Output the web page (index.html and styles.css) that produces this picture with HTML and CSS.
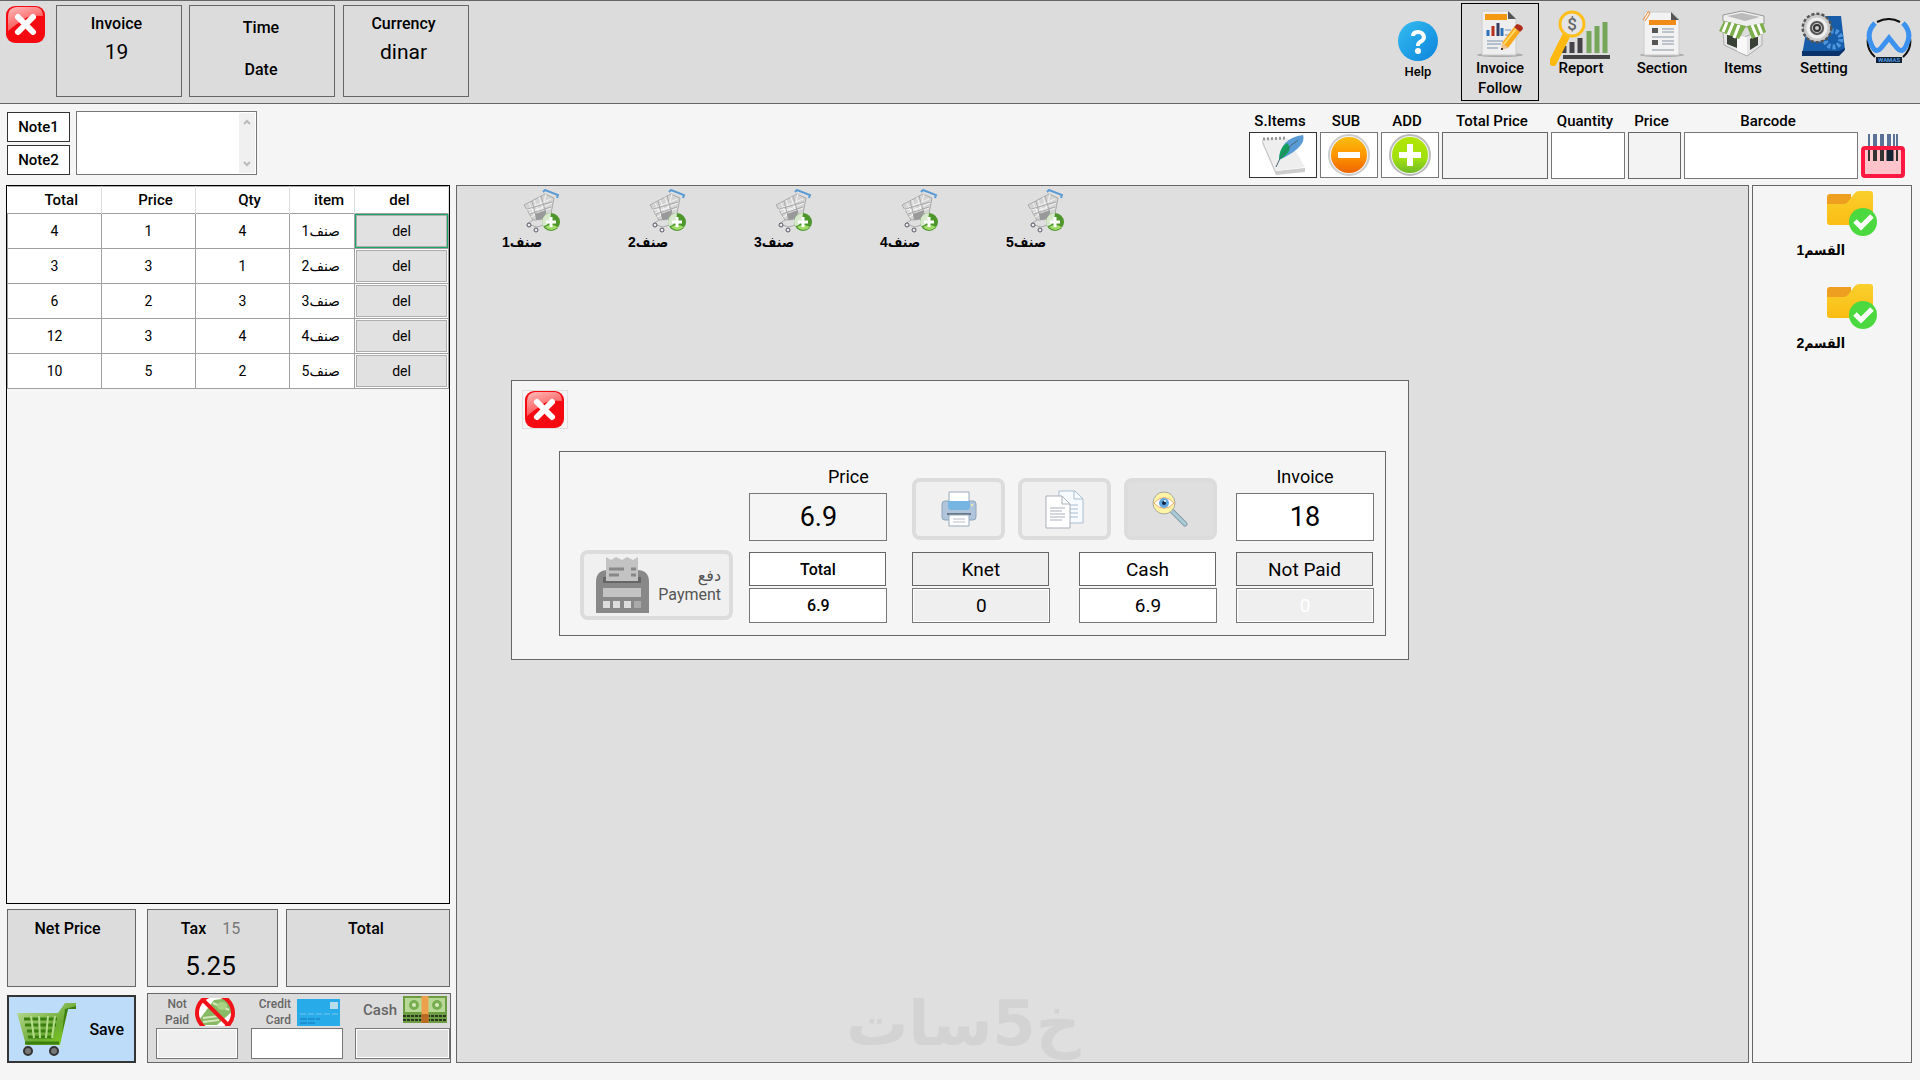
FILE: index.html
```html
<!DOCTYPE html>
<html lang="en">
<head>
    <meta charset="UTF-8">
    <meta name="viewport" content="width=device-width, initial-scale=1.0">
    <title>Point of Sale</title>
    <link rel="stylesheet" href="styles.css">
</head>
<body>
    <!-- shared drawings -->
    <svg class="defs" width="0" height="0" aria-hidden="true">
        <defs>
            <linearGradient id="gloss" x1="0" y1="0" x2="0.5" y2="1">
                <stop offset="0" stop-color="#fbb"/><stop offset="1" stop-color="#f44"/>
            </linearGradient>
            <linearGradient id="blue" x1="0" y1="0" x2="1" y2="1">
                <stop offset="0" stop-color="#35bdf0"/><stop offset="1" stop-color="#0c83dc"/>
            </linearGradient>
            <linearGradient id="orange" x1="0" y1="0" x2="0" y2="1">
                <stop offset="0" stop-color="#f7bd10"/><stop offset="0.5" stop-color="#ff9600"/><stop offset="1" stop-color="#ee6500"/>
            </linearGradient>
            <linearGradient id="lime" x1="0" y1="0" x2="0" y2="1">
                <stop offset="0" stop-color="#b4e600"/><stop offset="0.6" stop-color="#a0e010"/><stop offset="1" stop-color="#72ba28"/>
            </linearGradient>
            <linearGradient id="cartGreen" x1="0" y1="0" x2="1" y2="1">
                <stop offset="0" stop-color="#c4e0a4"/><stop offset="0.6" stop-color="#6cab32"/><stop offset="1" stop-color="#82d615"/>
            </linearGradient>
            <linearGradient id="folderYellow" x1="0" y1="0" x2="0" y2="1">
                <stop offset="0" stop-color="#facf2c"/><stop offset="1" stop-color="#fabd14"/>
            </linearGradient>
        </defs>
        <symbol id="close" viewBox="0 0 40 38">
            <rect x="0" y="0" width="39" height="37" rx="9" fill="#f40a10"/>
            <path d="M2 25V10Q2 2 10 1H30Q37 2 37 10Q24 9 18 13T2 25Z" fill="url(#gloss)"/>
            <path d="M12 11L27 26M27 11L12 26" stroke="#fff" stroke-width="6" stroke-linecap="round"/>
        </symbol>
        <symbol id="cart" viewBox="0 0 38 44">
            <g fill="none" stroke="#aaa" stroke-width="1">
                <path d="M1 16L22 5L31 9L27 30L10 31Z" fill="#d4d4d4"/>
                <path d="M4 20L28 10M6 24L29 14M8 28L28 19M6 14L14 31M11 11L19 31M16 8L23 30M23 5L19 20L3 21" stroke="#f3f3f3"/>
                <path d="M4 20L29 13M7 25L28 18M9 12L14 31M18 7L24 28"/>
                <path d="M10 31L4 35L14 38L27 34"/>
            </g>
            <path d="M12 25L23 21L22 30L13 31Z" fill="#999"/>
            <path d="M20 3L22 1L35 6L34 9" fill="none" stroke="#5a9bd5" stroke-width="2"/>
            <g fill="#eee" stroke="#556" stroke-width="1"><circle cx="6" cy="36" r="2"/><circle cx="13" cy="41" r="2"/></g>
            <circle cx="28" cy="33" r="9" fill="#4c962c"/>
            <path d="M28 24A9 9 0 0 0 20 37Q27 37 28 24" fill="#d7e8cc"/>
            <path d="M22 38Q28 44 35 38Q28 34 22 38Z" fill="#a2dc6a"/>
            <path d="M28 28V38M23 33H33" stroke="#fff" stroke-width="3"/>
        </symbol>
        <symbol id="folder" viewBox="0 0 51 45">
            <path d="M0 6Q0 3 3 3H24V20H0Z" fill="#ee9f20"/>
            <path d="M0 13H17Q20 13 23 8L27 3Q29 0 32 0H43Q46 0 46 3V34H3Q0 34 0 31Z" fill="url(#folderYellow)"/>
            <circle cx="36" cy="31" r="14" fill="#4cd93f"/>
            <path d="M28 30L34 36L45 25" fill="none" stroke="#fff" stroke-width="5"/>
        </symbol>
    </svg>

    <header class="topbar">
        <button class="close-btn" aria-label="Exit"><svg width="40" height="38"><use href="#close"/></svg></button>
        <div class="info-box">
            <h2>Invoice</h2>
            <p>19</p>
        </div>
        <div class="info-box time-box">
            <h2>Time</h2>
            <h2>Date</h2>
        </div>
        <div class="info-box">
            <h2>Currency</h2>
            <p>dinar</p>
        </div>
        <nav class="menu">
            <button class="menu-item help">
                <svg width="41" height="42" viewBox="0 0 41 42">
                    <circle cx="20" cy="21" r="20" fill="url(#blue)"/>
                    <path d="M15 16Q15 12 20 12T26 17Q26 20 22 22Q20 23 20 26" fill="none" stroke="#fff" stroke-width="4"/>
                    <circle cx="20" cy="31" r="3" fill="#fff"/>
                </svg>
                <span>Help</span>
            </button>
            <button class="menu-item active">
                <svg width="48" height="48" viewBox="0 0 48 48">
                    <ellipse cx="24" cy="45" rx="23" ry="2" fill="#aaa"/>
                    <path d="M6 1H32L40 9V45H6Z" fill="#eee" stroke="#ccc"/>
                    <path d="M32 1L40 9H32Z" fill="#555"/>
                    <rect x="9" y="4" width="22" height="6" fill="#f39a12"/>
                    <path d="M12 26V20M26 26V18" stroke="#2d72b8" stroke-width="3"/>
                    <path d="M17 26V16" stroke="#b8301c" stroke-width="3"/>
                    <path d="M22 26V13" stroke="#333d66" stroke-width="3"/>
                    <path d="M11 31H27M11 34H25M11 38H22M29 20H35M29 25H33" stroke="#7890ac" stroke-width="1"/>
                    <path d="M26 33L38 17L44 22L32 38Z" fill="#f8a91c"/>
                    <path d="M28 34L40 19" stroke="#ffdc6c" stroke-width="2"/>
                    <path d="M38 17L41 14Q47 15 47 19L44 22Z" fill="#af2d18"/>
                    <path d="M26 33L32 38L25 40Z" fill="#edc08c"/><circle cx="26" cy="39" r="1" fill="#111"/>
                </svg>
                <span>Invoice<br>Follow</span>
            </button>
            <button class="menu-item report">
                <svg width="62" height="56" viewBox="0 0 62 56">
                    <path d="M13 47H60" stroke="#444" stroke-width="4"/>
                    <path d="M14 43V36M22 43V32M30 43V28" stroke="#454347" stroke-width="5"/>
                    <path d="M39 43V21M47 43V16M55 43V12" stroke="#75a65c" stroke-width="5"/>
                    <path d="M16 26L3 52" stroke="#fdb912" stroke-width="8" stroke-linecap="round"/>
                    <circle cx="22" cy="14" r="12" fill="#e4e4e4" stroke="#fdbf1d" stroke-width="3"/>
                    <text x="22" y="20" text-anchor="middle" font-size="17" fill="#666">$</text>
                </svg>
                <span>Report</span>
            </button>
            <button class="menu-item">
                <svg width="44" height="48" viewBox="0 0 44 48">
                    <ellipse cx="22" cy="45" rx="22" ry="2" fill="#aaa"/>
                    <path d="M4 2H32L39 9V45H4Z" fill="#f2f2f2" stroke="#ccc"/>
                    <path d="M31 2L39 10H31Z" fill="#555"/>
                    <rect x="9" y="10" width="27" height="5" fill="#f18b18"/>
                    <path d="M3 10L8 2Q11 1 9 5L5 11" fill="none" stroke="#ef8b39"/>
                    <path d="M12 18H18V23H12ZM12 30H18V35H12Z" fill="#555"/>
                    <path d="M22 19H34M22 22H34M12 27H34M22 31H34M22 34H34M12 40H34" stroke="#8694a4"/>
                </svg>
                <span>Section</span>
            </button>
            <button class="menu-item">
                <svg width="48" height="48" viewBox="0 0 48 48">
                    <path d="M4 20L26 27L43 19V35L28 46L5 35Z" fill="#e5e5e5" stroke="#aaa"/>
                    <path d="M8 24L18 28V38L8 34ZM31 29L39 24V35L31 40Z" fill="#394035"/>
                    <path d="M18 25L28 27V45L18 41Z" fill="#f8f8f8"/>
                    <path d="M4 5L23 1L45 6V14L27 17L4 11Z" fill="#efefef" stroke="#999"/>
                    <path d="M8 6L23 3L41 7L26 11Z" fill="#bbb"/>
                    <path d="M5 11L27 16L20 29L0 21ZM28 16L44 13L47 22L33 29Z" fill="#7dae4c"/>
                    <path d="M8 12L4 22M14 13L9 25M20 15L15 28M33 15L38 27M39 14L43 24" stroke="#fff" stroke-width="3"/>
                </svg>
                <span>Items</span>
            </button>
            <button class="menu-item">
                <svg width="46" height="48" viewBox="0 0 46 48">
                    <path d="M8 6H40L44 40L37 45H1Z" fill="#165ca9"/><path d="M1 41H38L44 38L43 41L38 46H1Z" fill="#0c326c"/>
                    <circle cx="32" cy="29" r="8" fill="none" stroke="#4d96dc" stroke-width="5" stroke-dasharray="3 2"/>
                    <circle cx="16" cy="18" r="14" fill="#aaa" stroke="#555" stroke-width="3" stroke-dasharray="3 2"/>
                    <circle cx="16" cy="18" r="13" fill="#ccc"/>
                    <g fill="none"><circle cx="16" cy="18" r="9" stroke="#eee" stroke-width="3"/><circle cx="16" cy="18" r="6" stroke="#555" stroke-width="2"/><circle cx="16" cy="18" r="3" stroke="#333" stroke-width="2"/></g>
                </svg>
                <span>Setting</span>
            </button>
            <svg class="brand" width="46" height="48" viewBox="0 0 46 48">
                <path d="M11 4Q23 -2 34 4M2 20Q0 31 9 39M44 20Q46 31 37 39" fill="none" stroke="#111" stroke-width="2"/>
                <path d="M9 5Q-1 15 6 28Q10 36 15 30L23 20L31 30Q36 36 40 28Q47 15 37 5" fill="none" stroke="#3c92ee" stroke-width="5"/>
                <rect x="10" y="39" width="26" height="6" fill="#123"/>
                <text x="23" y="44" text-anchor="middle" font-size="6" fill="#59a6f3">WAMAS</text>
            </svg>
        </nav>
    </header>

    <section class="entry-bar">
        <div class="note-buttons">
            <button>Note1</button>
            <button>Note2</button>
        </div>
        <div class="note-area">
            <textarea aria-label="Note"></textarea>
            <div class="scroller">
                <svg width="8" height="6" viewBox="0 0 8 6"><path d="M1 5L4 2L7 5" fill="none" stroke="#bbb" stroke-width="2"/></svg>
                <svg width="8" height="6" viewBox="0 0 8 6"><path d="M1 1L4 4L7 1" fill="none" stroke="#bbb" stroke-width="2"/></svg>
            </div>
        </div>
        <div class="entry-fields">
            <div class="field s-items">
                <label for="s-items">S.Items</label>
                <button id="s-items">
                    <svg width="46" height="42" viewBox="0 0 46 42">
                        <path d="M2 5L16 37L45 34V38L16 41L2 9Z" fill="#ccc"/>
                        <path d="M2 4L28 4L45 33L16 37Z" fill="#eee"/>
                        <path d="M3 5L27 4" stroke="#999" stroke-width="3" stroke-dasharray="2 2"/>
                        <path d="M19 26Q20 4 43 1Q47 13 19 26Z" fill="#5b9bd5"/>
                        <path d="M19 26Q19 14 27 9Q35 17 19 26Z" fill="#13a05c"/>
                        <path d="M16 33Q22 17 38 6" fill="none" stroke="#467"/>
                    </svg>
                </button>
            </div>
            <div class="field round-btn">
                <label for="sub">SUB</label>
                <button id="sub">
                    <svg width="44" height="44" viewBox="0 0 44 44">
                        <circle cx="22" cy="22" r="20" fill="#f4f4f4" stroke="#ccc" stroke-width="2"/>
                        <circle cx="22" cy="22" r="18" fill="url(#orange)"/>
                        <path d="M11 22H33" stroke="#fff" stroke-width="6"/>
                    </svg>
                </button>
            </div>
            <div class="field round-btn">
                <label for="add">ADD</label>
                <button id="add">
                    <svg width="44" height="44" viewBox="0 0 44 44">
                        <circle cx="22" cy="22" r="20" fill="#f4f4f4" stroke="#bbb" stroke-width="2"/>
                        <circle cx="22" cy="22" r="18" fill="url(#lime)"/>
                        <path d="M11 22H33M22 11V33" stroke="#fff" stroke-width="6"/>
                    </svg>
                </button>
            </div>
            <div class="field total-price">
                <label for="total-price">Total Price</label>
                <input id="total-price" type="text" readonly>
            </div>
            <div class="field quantity">
                <label for="quantity">Quantity</label>
                <input id="quantity" type="text">
            </div>
            <div class="field price">
                <label for="price">Price</label>
                <input id="price" type="text" readonly>
            </div>
            <div class="field barcode">
                <label for="barcode">Barcode</label>
                <input id="barcode" type="text">
            </div>
            <svg class="barcode-icon" width="44" height="46" viewBox="0 0 44 46">
                <path d="M8 1V17M33 1V17M36 1V17" stroke="#5b7196" stroke-width="2"/>
                <path d="M14 1V17M21 1V17M28 1V17" stroke="#5b7196" stroke-width="4"/>
                <rect x="2" y="15" width="40" height="28" rx="2" fill="#ffc4ca"/>
                <path d="M8 16V28M36 16V28" stroke="#333" stroke-width="2"/>
                <path d="M14 16V28M21 16V28" stroke="#333" stroke-width="4"/><path d="M29 16V28" stroke="#123" stroke-width="7"/>
                <rect x="2" y="15" width="40" height="28" rx="2" fill="none" stroke="#fc1840" stroke-width="4"/>
            </svg>
        </div>
    </section>

    <main class="workspace">
        <aside class="order">
            <div class="order-list">
                <table>
                    <thead>
                        <tr><th>Total</th><th>Price</th><th>Qty</th><th class="item-col">item</th><th class="del-col">del</th></tr>
                    </thead>
                    <tbody>
                        <tr><td>4</td><td>1</td><td>4</td><td class="item-col">صنف1</td><td class="del-cell selected"><button>del</button></td></tr>
                        <tr><td>3</td><td>3</td><td>1</td><td class="item-col">صنف2</td><td class="del-cell"><button>del</button></td></tr>
                        <tr><td>6</td><td>2</td><td>3</td><td class="item-col">صنف3</td><td class="del-cell"><button>del</button></td></tr>
                        <tr><td>12</td><td>3</td><td>4</td><td class="item-col">صنف4</td><td class="del-cell"><button>del</button></td></tr>
                        <tr><td>10</td><td>5</td><td>2</td><td class="item-col">صنف5</td><td class="del-cell"><button>del</button></td></tr>
                    </tbody>
                </table>
            </div>
            <div class="totals">
                <div class="sum-box net"><h2>Net Price</h2></div>
                <div class="sum-box tax">
                    <h2>Tax <span>15</span></h2>
                    <p>5.25</p>
                </div>
                <div class="sum-box sum"><h2>Total</h2></div>
            </div>
            <div class="checkout">
                <button class="save">
                    <svg width="60" height="56" viewBox="0 0 60 56">
                        <path d="M0 12H41L48 2H59V8H51L43 44H9Z" fill="url(#cartGreen)"/>
                        <path d="M48 8L59 5V8H51L45 32Z" fill="#3b7f10"/>
                        <path d="M7 18H40M8 24H39M10 30H37M11 36H36" stroke="#3b7f10" stroke-width="3"/>
                        <path d="M14 15L17 37M22 15L23 37M31 15L29 37M38 15L35 37" stroke="#b4dd8b" stroke-width="2"/>
                        <path d="M8 42H42" stroke="#3b7f10" stroke-width="3"/>
                        <g fill="#777" stroke="#333" stroke-width="2"><circle cx="11" cy="50" r="4"/><circle cx="37" cy="50" r="4"/></g>
                    </svg>
                    <span>Save</span>
                </button>
                <div class="payments">
                    <div class="pay not-paid">
                        <label for="not-paid">Not<br>Paid</label>
                        <svg width="40" height="28" viewBox="0 0 40 28">
                            <circle cx="20" cy="15" r="17" fill="#fff"/>
                            <path d="M4 22L19 2L34 0L39 12L22 27H8Z" fill="#88b964"/>
                            <path d="M8 20L24 18M8 24L24 22M18 5L34 12" stroke="#d5e8bb" stroke-width="2"/>
                            <ellipse cx="27" cy="8" rx="5" ry="4" fill="#aad284"/>
                            <circle cx="20" cy="15" r="18" fill="none" stroke="#f2131a" stroke-width="4"/>
                            <path d="M8 2L33 27" stroke="#f2131a" stroke-width="4"/>
                        </svg>
                        <input id="not-paid" type="text" readonly>
                    </div>
                    <div class="pay credit">
                        <label for="credit">Credit<br>Card</label>
                        <svg width="43" height="27" viewBox="0 0 43 27">
                            <rect width="43" height="27" fill="#27ace9"/>
                            <rect x="33" y="3" width="8" height="7" fill="#b8dcea"/>
                            <path d="M3 15H41" stroke="#75c6ee" stroke-dasharray="6 2"/>
                            <path d="M3 20H23M3 24H18" stroke="#1775b6" stroke-dasharray="7 1"/>
                        </svg>
                        <input id="credit" type="text">
                    </div>
                    <div class="pay cash">
                        <label for="cash">Cash</label>
                        <svg width="44" height="27" viewBox="0 0 44 27">
                            <rect width="44" height="27" fill="#6d9d43"/>
                            <rect x="2" y="2" width="40" height="14" fill="#b7d995"/>
                            <circle cx="11" cy="9" r="5" fill="#79ad52"/><circle cx="34" cy="9" r="5" fill="#79ad52"/>
                            <circle cx="11" cy="9" r="2" fill="#d6eabb"/><circle cx="34" cy="9" r="2" fill="#d6eabb"/>
                            <path d="M0 20H44M0 24H44" stroke="#27351e" stroke-width="2" stroke-dasharray="3 1"/>
                            <path d="M22 0V27" stroke="#eda04c" stroke-width="7"/><path d="M22 18V27" stroke="#b96b24" stroke-width="7"/>
                        </svg>
                        <input id="cash" type="text" readonly>
                    </div>
                </div>
            </div>
        </aside>

        <section class="products">
            <button class="product"><svg width="38" height="44"><use href="#cart"/></svg><span>صنف1</span></button>
            <button class="product"><svg width="38" height="44"><use href="#cart"/></svg><span>صنف2</span></button>
            <button class="product"><svg width="38" height="44"><use href="#cart"/></svg><span>صنف3</span></button>
            <button class="product"><svg width="38" height="44"><use href="#cart"/></svg><span>صنف4</span></button>
            <button class="product"><svg width="38" height="44"><use href="#cart"/></svg><span>صنف5</span></button>
            <div class="watermark">خ5سات</div>
        </section>

        <aside class="sections">
            <button class="folder"><svg width="51" height="45"><use href="#folder"/></svg><span>القسم1</span></button>
            <button class="folder"><svg width="51" height="45"><use href="#folder"/></svg><span>القسم2</span></button>
        </aside>
    </main>

    <div class="dialog" role="dialog" aria-label="Invoice Follow">
        <button class="close-btn dialog-close" aria-label="Close"><svg width="40" height="38"><use href="#close"/></svg></button>
        <div class="dialog-body">
            <button class="tool payment">
                <svg width="53" height="57" viewBox="0 0 53 57">
                    <path d="M0 56V25Q0 13 12 13H41Q53 13 53 25V56Z" fill="#888"/>
                    <rect x="7" y="20" width="38" height="6" fill="#666"/>
                    <path d="M10 0L15 3L20 0L26 3L31 0L37 3L42 0V24H10Z" fill="#c3c3c3"/>
                    <path d="M13 12H28M35 12H40M13 18H23M35 18H40" stroke="#888" stroke-width="3"/>
                    <rect x="7" y="31" width="38" height="9" fill="#c3c3c3"/>
                    <path d="M7 44H14V51H7ZM17 44H24V51H17ZM28 44H35V51H28Z" fill="#ddd"/><path d="M38 44H45V51H38Z" fill="#aaa"/>
                </svg>
                <span>دفع<br>Payment</span>
            </button>
            <div class="column price-column">
                <label for="d-price">Price</label>
                <input id="d-price" class="big" type="text" value="6.9" readonly>
                <div class="pair small">
                    <label for="d-total">Total</label>
                    <input id="d-total" type="text" value="6.9">
                </div>
            </div>
            <div class="middle">
                <div class="tools">
                    <button class="tool" aria-label="Print">
                        <svg width="36" height="36" viewBox="0 0 36 36">
                            <rect x="1" y="10" width="34" height="19" rx="3" fill="#b0c5db" stroke="#8ca3b8"/>
                            <path d="M8 1H28V11H8Z" fill="#fff" stroke="#9ab"/>
                            <path d="M7 10H29V16Q29 19 26 19H10Q7 19 7 16Z" fill="#76b5e2"/>
                            <path d="M6 23H30" stroke="#678" stroke-width="2"/>
                            <path d="M8 24H28V35H8Z" fill="#fff" stroke="#9ab"/>
                            <path d="M12 28H24M12 31H24" stroke="#bbc"/><circle cx="31" cy="14" r="1" fill="#fff4a0"/>
                        </svg>
                    </button>
                    <button class="tool" aria-label="Copy">
                        <svg width="39" height="39" viewBox="0 0 39 39">
                            <path d="M14 1H30L38 9V33H14Z" fill="#f7fbff" stroke="#a8bed2"/>
                            <path d="M29 1V9H38M24 15H33M24 19H33M24 23H33M24 27H33" fill="none" stroke="#a8bed2"/>
                            <path d="M1 6H17L25 14V38H1Z" fill="#fff" stroke="#aaafb8"/>
                            <path d="M17 6V14H25M5 18H20M5 21H17M5 24H20M5 27H20M5 30H17" fill="none" stroke="#aaafb8"/>
                        </svg>
                    </button>
                    <button class="tool pressed" aria-label="Search">
                        <svg width="36" height="36" viewBox="0 0 36 36">
                            <path d="M20 20L33 33" stroke="#899ba6" stroke-width="5" stroke-linecap="round"/>
                            <path d="M20 20L33 33" stroke="#aacbd8" stroke-width="3" stroke-linecap="round"/>
                            <circle cx="12" cy="12" r="11" fill="#fff4a5" stroke="#a7aaa0"/>
                            <path d="M2 12Q12 1 22 12Q12 23 2 12Z" fill="#fff" stroke="#e9ae78"/>
                            <circle cx="12" cy="12" r="5" fill="#63a8dd"/><circle cx="12" cy="12" r="2" fill="#124"/><circle cx="13" cy="10" r="1" fill="#fff"/>
                        </svg>
                    </button>
                </div>
                <div class="pairs">
                    <div class="pair muted">
                        <label for="d-knet">Knet</label>
                        <input id="d-knet" type="text" value="0">
                    </div>
                    <div class="pair">
                        <label for="d-cash">Cash</label>
                        <input id="d-cash" type="text" value="6.9">
                    </div>
                </div>
            </div>
            <div class="column">
                <label for="d-invoice">Invoice</label>
                <input id="d-invoice" class="big" type="text" value="18">
                <div class="pair muted faded">
                    <label for="d-not-paid">Not Paid</label>
                    <input id="d-not-paid" type="text" value="0">
                </div>
            </div>
        </div>
    </div>
</body>
</html>
```
FILE: styles.css
```css
* {
    box-sizing: border-box;
}
body {
    margin: 0;
    min-height: 100vh;
    display: flex;
    flex-direction: column;
    background-color: #f5f5f5;
    color: #000;
    font-family: Roboto, "DejaVu Sans", sans-serif;
    font-size: 16px;
    font-weight: 500;
}
h2, p {
    margin: 0;
    font-weight: 500;
}
h2 {
    font-size: 16px;
    line-height: 20px;
}
button, input, textarea {
    font: inherit;
    color: inherit;
    padding: 0;
    margin: 0;
    border-radius: 0;
    outline: none;
}
button {
    cursor: pointer;
}
svg {
    display: block;
    flex-shrink: 0;
}
.defs {
    position: absolute;
}

/* top bar */
.topbar {
    display: flex;
    align-items: flex-start;
    height: 104px;
    padding: 4px 8px 0 3px;
    background-color: #dcdcdc;
    border-top: 1px solid #666;
    border-bottom: 1px solid #666;
}
.close-btn {
    width: 46px;
    height: 39px;
    padding-left: 2px;
    background: none;
    border: 1px solid #e0e0e0;
}
.info-box {
    width: 126px;
    height: 92px;
    margin-left: 8px;
    padding: 8px 5px 0 0;
    border: 1px solid #666;
    text-align: center;
}
.info-box p {
    font-size: 21px;
    line-height: 36px;
    font-weight: 400;
}
.close-btn + .info-box {
    margin-left: 7px;
}
.time-box {
    width: 146px;
    margin-left: 7px;
    padding: 12px 2px 0 0;
}
.time-box h2 + h2 {
    margin-top: 22px;
}
.menu {
    display: flex;
    align-items: flex-start;
    margin-left: auto;
    margin-top: -2px;
}
.menu-item {
    display: flex;
    flex-direction: column;
    align-items: center;
    width: 78px;
    height: 98px;
    margin-right: 3px;
    padding-top: 6px;
    background: none;
    border: 1px solid transparent;
    font-size: 15px;
    line-height: 20px;
}
.menu-item.active {
    border-color: #000;
}
.menu-item.help {
    margin-right: 4px;
    padding-top: 16px;
    font-size: 13px;
}
.report svg {
    margin-bottom: -8px;
}
.brand {
    margin-top: 15px;
}

/* entry bar */
.entry-bar {
    display: flex;
    align-items: flex-start;
    gap: 6px;
    padding: 7px 15px 0 7px;
    height: 81px;
}
.note-buttons {
    display: flex;
    flex-direction: column;
    gap: 3px;
    padding-top: 1px;
}
.note-buttons button {
    width: 63px;
    height: 30px;
    background-color: #fff;
    border: 1px solid #333;
    font-size: 15px;
}
.note-area {
    display: flex;
    width: 181px;
    height: 64px;
    padding: 1px;
    background-color: #fff;
    border: 1px solid #777;
}
.note-area textarea {
    flex: 1;
    min-width: 0;
    border: none;
    resize: none;
    overflow: hidden;
}
.scroller {
    display: flex;
    flex-direction: column;
    justify-content: space-between;
    align-items: center;
    width: 16px;
    padding: 6px 0;
    background-color: #f0f0f0;
}
.entry-fields {
    display: flex;
    align-items: flex-start;
    gap: 3px;
    margin-left: auto;
}
.field {
    display: flex;
    flex-direction: column;
    text-align: center;
    font-size: 15px;
}
.field label {
    line-height: 21px;
    padding-right: 6px;
    white-space: nowrap;
}
.field input {
    width: 100%;
    height: 47px;
    background-color: #fff;
    border: 1px solid #777;
}
.field input:read-only {
    background-color: #f3f3f3;
    border-color: #666;
}
.field button {
    display: flex;
    justify-content: center;
    align-items: center;
    height: 46px;
    background-color: #fff;
    border: 1px solid #777;
}
.s-items {
    width: 68px;
}
.s-items button {
    border-color: #333;
}
.round-btn { width: 58px; }
.total-price { width: 106px; }
.quantity { width: 74px; }
.price { width: 53px; }
.barcode { width: 174px; }
.barcode-icon {
    margin-top: 22px;
}

/* workspace */
.workspace {
    flex: 1;
    display: flex;
    padding: 0 8px 17px 6px;
}
.order {
    display: flex;
    flex-direction: column;
    width: 445px;
    margin-right: 5px;
}
.order-list {
    flex: 1;
    width: 444px;
    border: 1px solid #000;
}
table {
    width: 100%;
    table-layout: fixed;
    border-collapse: collapse;
    text-align: center;
    background-color: #fff;
}
th {
    height: 27px;
    padding: 0 0 0 14px;
    border-right: 1px solid #ddd;
    font-size: 15px;
    font-weight: 500;
}
thead {
    border-top: 1px solid #aaa;
}
td {
    height: 35px;
    padding: 0;
    border: 1px solid #a0a0a0;
    font-size: 14px;
    font-weight: 400;
}
.item-col {
    width: 65px;
    padding: 0 14px 0 0;
    text-align: right;
}
th.item-col {
    padding-right: 10px;
}
.del-col {
    width: 94px;
    padding: 0 4px 0 0;
}
.del-cell {
    padding: 1px;
}
.del-cell button {
    display: block;
    width: 100%;
    height: 32px;
    background-color: #e1e1e1;
    border: 1px solid #adadad;
}
.selected button {
    outline: 1px solid #18a765;
}
.totals {
    display: flex;
    margin: 5px 0 6px 1px;
}
.sum-box {
    height: 78px;
    padding: 9px 4px 0 0;
    background-color: #dcdcdc;
    border: 1px solid #666;
    text-align: center;
}
.net {
    width: 129px;
    padding-right: 8px;
}
.tax {
    width: 131px;
    margin: 0 8px 0 11px;
}
.tax span {
    margin-left: 12px;
    color: #777;
    font-weight: 400;
}
.tax p {
    font-size: 26px;
    line-height: 30px;
    margin-top: 12px;
    font-weight: 400;
}
.sum {
    width: 164px;
}
.checkout {
    display: flex;
    align-items: flex-end;
    margin-left: 1px;
}
.save {
    display: flex;
    align-items: center;
    justify-content: space-between;
    width: 129px;
    height: 68px;
    padding: 0 10px 0 8px;
    background-color: #bddcfa;
    border: 2px solid #333;
}
.payments {
    display: flex;
    width: 304px;
    height: 70px;
    margin-left: 11px;
    padding: 2px 0 3px 8px;
    background-color: #dcdcdc;
    border: 1px solid #666;
}
.pay {
    display: flex;
    flex-wrap: wrap;
    align-items: center;
    align-content: space-between;
    justify-content: flex-end;
    gap: 0 6px;
    color: #666;
    font-size: 12px;
    line-height: 16px;
    text-align: right;
}
.pay svg {
    margin-right: 3px;
}
.pay input {
    width: 100%;
    height: 31px;
    background-color: #fff;
    border: 1px solid #777;
    box-shadow: inset 0 0 0 1px #fff;
}
.not-paid {
    width: 82px;
    text-align: center;
}
.not-paid input {
    background-color: #efefef;
}
.credit {
    width: 92px;
    margin: 0 12px 0 13px;
}
.cash {
    width: 95px;
    font-size: 15px;
}
.cash input {
    background-color: #dedede;
}

/* products */
.products {
    position: relative;
    flex: 1;
    display: flex;
    align-items: flex-start;
    margin-right: 3px;
    padding: 3px 0 0 38px;
    background-color: #dfdfdf;
    border: 1px solid #666;
}
.product, .folder {
    display: flex;
    flex-direction: column;
    background: none;
    border: none;
    font-family: "Liberation Sans", "DejaVu Sans Condensed", "DejaVu Sans", sans-serif;
    font-size: 14px;
    line-height: 18px;
    font-weight: bold;
    text-align: right;
}
.product {
    width: 126px;
    align-items: flex-start;
    padding-left: 7px;
}
.product svg {
    margin-left: 21px;
}
.watermark {
    position: absolute;
    left: 389px;
    bottom: 0;
    font-family: "DejaVu Sans", sans-serif;
    font-size: 62px;
    line-height: 76px;
    font-weight: bold;
    color: #d3d3d3;
}

/* sections */
.sections {
    display: flex;
    flex-direction: column;
    gap: 25px;
    width: 160px;
    padding: 5px 33px 0 0;
    border: 1px solid #666;
}
.folder {
    align-items: flex-end;
    gap: 5px;
}
.folder span {
    margin-right: 33px;
}

/* invoice dialog */
.dialog {
    position: absolute;
    left: 50%;
    top: 380px;
    transform: translateX(-50%);
    width: 898px;
    padding: 9px 22px 23px 10px;
    background-color: #f5f5f5;
    border: 1px solid #666;
}
.dialog-close {
    display: block;
}
.dialog-body {
    display: flex;
    align-items: flex-end;
    margin: 22px 0 0 37px;
    padding: 13px 11px 12px 20px;
    border: 1px solid #666;
}
.dialog input {
    display: block;
    width: 100%;
    background-color: #fff;
    border: 1px solid #777;
    text-align: center;
}
.column {
    width: 138px;
    text-align: center;
    font-size: 18px;
}
.column > label {
    display: block;
    line-height: 24px;
    margin-bottom: 4px;
    font-weight: 400;
}
.dialog .big {
    height: 48px;
    margin-bottom: 11px;
    font-size: 27px;
    font-weight: 400;
}
.price-column {
    margin: 0 25px 0 16px;
}
.price-column > label {
    padding-left: 60px;
}
.dialog .big:read-only {
    background-color: #f5f5f5;
}
.pair {
    width: 138px;
    font-size: 19px;
    font-weight: 400;
    text-align: center;
}
.pair label {
    display: block;
    width: 137px;
    height: 34px;
    line-height: 34px;
    margin-bottom: 2px;
    background-color: #fff;
    border: 1px solid #666;
}
.pair input {
    height: 35px;
}
.pair.small {
    font-size: 16px;
    font-weight: 500;
}
.pair.muted label, .pair.muted input {
    background-color: #efefef;
}
.pair.muted input {
    box-shadow: inset 0 0 0 1px #fff;
}
.pair.faded input {
    color: #fff;
}
.middle {
    width: 306px;
    margin-right: 19px;
}
.tools, .pairs {
    display: flex;
    justify-content: space-between;
}
.tools {
    margin-bottom: 12px;
}
.tool {
    display: flex;
    justify-content: center;
    align-items: center;
    width: 93px;
    height: 62px;
    background-color: #f0f0f0;
    border: 4px solid #dcdcdc;
    border-radius: 8px;
}
.tool.pressed {
    background-color: #dfdfdf;
}
.payment {
    width: 154px;
    height: 70px;
    gap: 9px;
    margin-bottom: 3px;
    padding-left: 4px;
    color: #555;
    font-size: 16px;
    font-weight: 400;
    line-height: 19px;
    text-align: right;
}
```
